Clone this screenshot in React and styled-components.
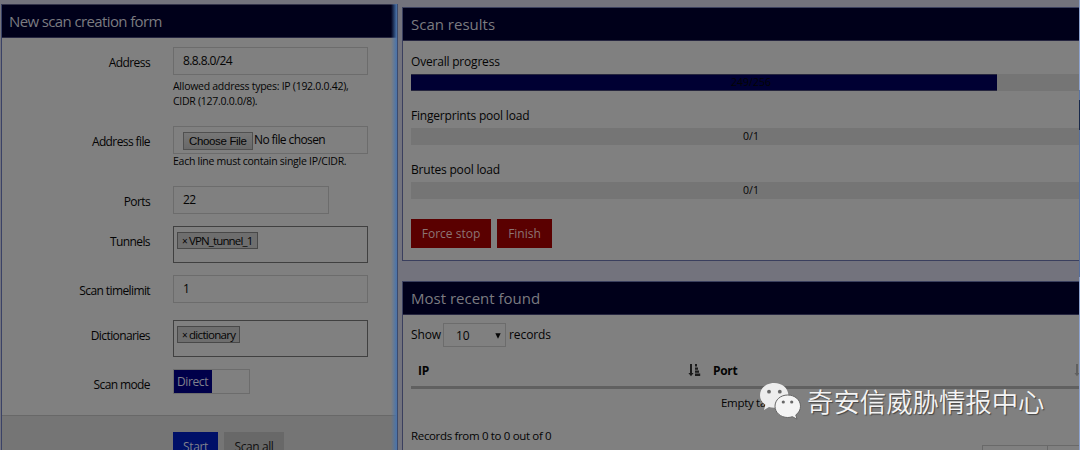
import React from "react";
import styled, { createGlobalStyle } from "styled-components";

const Global = createGlobalStyle`
  *, *::before, *::after { box-sizing: border-box; }
  body { margin: 0; background: #73737d; overflow: hidden; }
`;

const Page = styled.div`
  position: relative;
  display: flex;
  width: 1080px;
  height: 450px;
  overflow: hidden;
  background: #73737d;
  color: #040404;
  font: 12px/16px "Open Sans", "Noto Sans", sans-serif;
  font-weight: 450;
  white-space: nowrap;
`;

const FormPanel = styled.section`
  position: relative;
  width: 397px;
  height: 460px;
  margin: 4px 0 0 1px;
  flex: none;
  border: 1px solid #3a4266;
  border-top-color: #33334a;
  background: #808080;
  letter-spacing: -0.6px;
  &::after {
    content: "";
    position: absolute;
    top: -1px;
    right: -1px;
    width: 7px;
    height: 461px;
    background: linear-gradient(90deg, rgba(72, 112, 164, 0), rgba(72, 116, 172, 0.85) 70%, #4c72a8 84%, #3c4a6c 86%);
  }
`;

const Title = styled.h2`
  display: flex;
  align-items: center;
  height: 33px;
  margin: 0;
  padding: 0 0 0 ${(p) => p.$pad || 7}px;
  background: #00001a;
  border-bottom: 1px solid #262640;
  color: #7b7b80;
  font-size: 15px;
  font-weight: 400;
  letter-spacing: ${(p) => p.$ls || 0}px;
`;

const Row = styled.div`
  display: grid;
  grid-template-columns: 148px 1fr;
  column-gap: 23px;
  margin-top: ${(p) => p.$mt}px;
  height: ${(p) => p.$h}px;
`;

const Label = styled.label`
  justify-self: end;
  padding-top: 8px;
`;

const Field = styled.div`
  display: flex;
  align-items: center;
  width: ${(p) => p.$w || 195}px;
  height: 28px;
  padding: 0 9px;
  border: 1px solid #6c6c6c;
`;

const Hint = styled.div`
  margin-top: ${(p) => p.$mt || 0}px;
  font-size: 10.5px;
  line-height: 15px;
  letter-spacing: -0.27px;
`;

const FileButton = styled.span`
  width: 70px;
  height: 18px;
  margin: 2px 1px 0 0;
  padding: 0 5px;
  border: 1px solid #505050;
  background: linear-gradient(#777, #696969);
  font: 11.5px/16px "Liberation Sans", sans-serif;
  letter-spacing: -0.35px;
`;

const TagBox = styled.div`
  width: 195px;
  height: 37px;
  padding: 5px 3px;
  border: 1px solid #404040;
`;

const Tag = styled.span`
  display: flex;
  align-items: center;
  width: ${(p) => p.$w}px;
  height: 17px;
  padding: 0 4px;
  border: 1px solid #484848;
  background: #6e6e6e;
  font-size: 11.5px;
  letter-spacing: ${(p) => p.$ls}px;
`;

const TagX = styled.span`
  margin-right: 2px;
  font-size: 10px;
`;

const Toggle = styled.div`
  display: flex;
  width: 77px;
  height: 25px;
  border: 1px solid #6c6c6c;
`;

const ToggleOn = styled.span`
  width: 38px;
  padding-left: 3px;
  background: #00004a;
  color: #80808c;
  line-height: 23px;
  letter-spacing: -0.4px;
`;

const FormFooter = styled.div`
  display: flex;
  gap: 6px;
  height: 60px;
  margin-top: 21px;
  padding: 16px 0 0 171px;
  border-top: 1px solid #686868;
  background: #757575;
`;

const Button = styled.button`
  width: ${(p) => p.$w}px;
  height: 29px;
  padding: 0;
  border: 0;
  background: ${(p) => p.$bg};
  color: ${(p) => p.$fg};
  font: inherit;
  letter-spacing: ${(p) => p.$ls || 0}px;
`;

const Results = styled.main`
  display: flex;
  flex-direction: column;
  width: 677px;
  margin: 7px 0 0 4px;
  flex: none;
`;

const Panel = styled.section`
  flex: none;
  height: ${(p) => p.$h}px;
  margin-bottom: 20px;
  border: 1px solid #3a3f5e;
  border-right: 0;
  background: #808080;
`;

const PanelBody = styled.div`
  padding-left: 8px;
`;

const Caption = styled.div`
  padding-top: ${(p) => p.$top}px;
  height: ${(p) => p.$h}px;
  letter-spacing: -0.2px;
`;

const Track = styled.div`
  display: grid;
  height: 17px;
  background: #757575;
  font-size: 10.5px;
  line-height: 17px;
  > * { grid-area: 1 / 1; }
`;

const Fill = styled.div`
  width: 586px;
  background: #000033;
  border: 1px solid #26263e;
  border-width: 1px 0;
`;

const Count = styled.span`
  justify-self: center;
  padding-left: 12px;
`;

const Buttons = styled.div`
  display: flex;
  gap: 6px;
  margin-top: 20px;
`;

const Paging = styled.div`
  display: flex;
  align-items: center;
  height: 24px;
  margin-top: 8px;
  letter-spacing: -0.1px;
`;

const Select = styled.div`
  display: flex;
  align-items: center;
  justify-content: space-between;
  width: 63px;
  height: 24px;
  margin: 0 3px 0 2px;
  padding: 2px 4px 0 12px;
  border: 1px solid #6c6c6c;
`;

const Head = styled.div`
  display: grid;
  grid-template-columns: 270px 25px 1fr 5px;
  align-items: center;
  height: 42px;
  padding: 8px 0 0 7px;
  border-bottom: 3px solid #606060;
  font-weight: 700;
  letter-spacing: -0.3px;
`;

const Empty = styled.div`
  padding: 6px 0 0 310px;
  height: 32px;
  font-size: 11.5px;
  letter-spacing: -0.3px;
`;

const Records = styled.div`
  margin-top: 7px;
  font-size: 11.5px;
  letter-spacing: -0.34px;
`;

const Pager = styled.div`
  display: flex;
  justify-content: flex-end;
  margin-top: 1px;
`;

const PagerCell = styled.span`
  width: ${(p) => p.$w}px;
  height: 20px;
  border: 1px solid #696969;
  border-right: 0;
`;

const Edge = styled.div`
  position: absolute;
  top: 0;
  right: 0;
  width: 1px;
  height: 450px;
  background: linear-gradient(#8ea4d0 0 90px, #5a74a4 90px 100px, #16284c 100px 130px, #566e9c 130px 277px, #8ea4d0 277px);
`;

const Watermark = styled.div`
  position: absolute;
  left: 759px;
  top: 382px;
  display: flex;
  color: #f4f4f4;
  font: 26.4px/40px "Noto Sans CJK SC", sans-serif;
  text-shadow: 1px 1px 1px #444;
`;

const WatermarkText = styled.span`
  margin: -1px 0 0 6px;
  font-weight: 350;
`;

const SortIcon = ({ color = "#1c1c1c" }) => (
  <svg width="13" height="14" viewBox="0 0 13 14" fill={color}>
    <path d="M2 0h2v9h1.600L3 12.300.4 9H2z" />
    <path d="M7 0h2v2.600H7zM7 3.400h3v2.300H7zM7 6.500h4v2.300H7zM7 9.600h5.200v2.400H7z" />
  </svg>
);

const WechatIcon = () => (
  <svg width="42" height="40" viewBox="0 0 42 40">
    <path d="M15.200 1C7 1 1 6.300 1 13.200c0 4 2 7.300 5.300 9.500L5 28l5-3c1.600.5 3.300.8 5.200.8 8 0 14.200-5.500 14.200-12.500S23.200 1 15.200 1z" fill="#ededed" />
    <path d="M28.700 13C21.500 13 16 17.900 16 24.200s5.500 11.300 12.700 11.300c1.700 0 3.200-.3 4.700-.8l4.600 2.500-1.200-4.300c3-2 4.700-5.300 4.700-8.700C41.500 17.900 35.900 13 28.700 13z" fill="#f4f4f4" stroke="#666" strokeWidth="1" />
    <g fill="#686868">
      <circle cx="10" cy="9.700" r="1.900" />
      <circle cx="20.800" cy="9.700" r="1.900" />
      <circle cx="24.300" cy="20" r="1.600" />
      <circle cx="32.700" cy="20" r="1.600" />
    </g>
  </svg>
);

export default function App() {
  return (
    <Page>
      <Global />
      <FormPanel>
        <Title $ls={-0.62}>New scan creation form</Title>
        <Row $mt={9} $h={79}>
          <Label>Address</Label>
          <div>
            <Field>8.8.8.0/24</Field>
            <Hint $mt={4}>Allowed address types: IP (192.0.0.42),<br />CIDR (127.0.0.0/8).</Hint>
          </div>
        </Row>
        <Row $mt={0} $h={60}>
          <Label>Address file</Label>
          <div>
            <Field><FileButton>Choose File</FileButton>No file chosen</Field>
            <Hint>Each line must contain single IP/CIDR.</Hint>
          </div>
        </Row>
        <Row $mt={0} $h={28}>
          <Label>Ports</Label>
          <Field $w={156}>22</Field>
        </Row>
        <Row $mt={12} $h={37}>
          <Label>Tunnels</Label>
          <TagBox><Tag $w={81} $ls={-0.85}><TagX>×</TagX>VPN_tunnel_1</Tag></TagBox>
        </Row>
        <Row $mt={12} $h={28}>
          <Label>Scan timelimit</Label>
          <Field>1</Field>
        </Row>
        <Row $mt={17} $h={37}>
          <Label>Dictionaries</Label>
          <TagBox><Tag $w={63} $ls={-0.7}><TagX>×</TagX>dictionary</Tag></TagBox>
        </Row>
        <Row $mt={12} $h={25}>
          <Label>Scan mode</Label>
          <Toggle><ToggleOn>Direct</ToggleOn></Toggle>
        </Row>
        <FormFooter>
          <Button $w={45} $bg="#001068" $fg="#80808c" $ls={-0.3}>Start</Button>
          <Button $w={60} $bg="#686868" $fg="#101010" $ls={-0.4}>Scan all</Button>
        </FormFooter>
      </FormPanel>
      <Results>
        <Panel $h={254}>
          <Title $pad={8}>Scan results</Title>
          <PanelBody>
            <Caption $top={13} $h={33}>Overall progress</Caption>
            <Track><Fill /><Count>249/256</Count></Track>
            <Caption $top={17} $h={37}>Fingerprints pool load</Caption>
            <Track><Count>0/1</Count></Track>
            <Caption $top={17} $h={37}>Brutes pool load</Caption>
            <Track><Count>0/1</Count></Track>
            <Buttons>
              <Button $w={80} $bg="#5a0000" $fg="#8c7474">Force stop</Button>
              <Button $w={55} $bg="#5a0000" $fg="#8c7474">Finish</Button>
            </Buttons>
          </PanelBody>
        </Panel>
        <Panel $h={190}>
          <Title $pad={8}>Most recent found</Title>
          <PanelBody>
            <Paging>
              Show
              <Select>
                10
                <svg width="6" height="6" viewBox="0 0 6 6"><path d="M.3.3h5.400L3 5.700z" fill="#060606" /></svg>
              </Select>
              records
            </Paging>
            <Head>
              <span>IP</span>
              <SortIcon />
              <span>Port</span>
              <SortIcon color="#606060" />
            </Head>
            <Empty>Empty table</Empty>
            <Records>Records from 0 to 0 out of 0</Records>
            <Pager><PagerCell $w={65} /><PagerCell $w={32} /></Pager>
          </PanelBody>
        </Panel>
      </Results>
      <Edge />
      <Watermark>
        <WechatIcon />
        <WatermarkText>奇安信威胁情报中心</WatermarkText>
      </Watermark>
    </Page>
  );
}
